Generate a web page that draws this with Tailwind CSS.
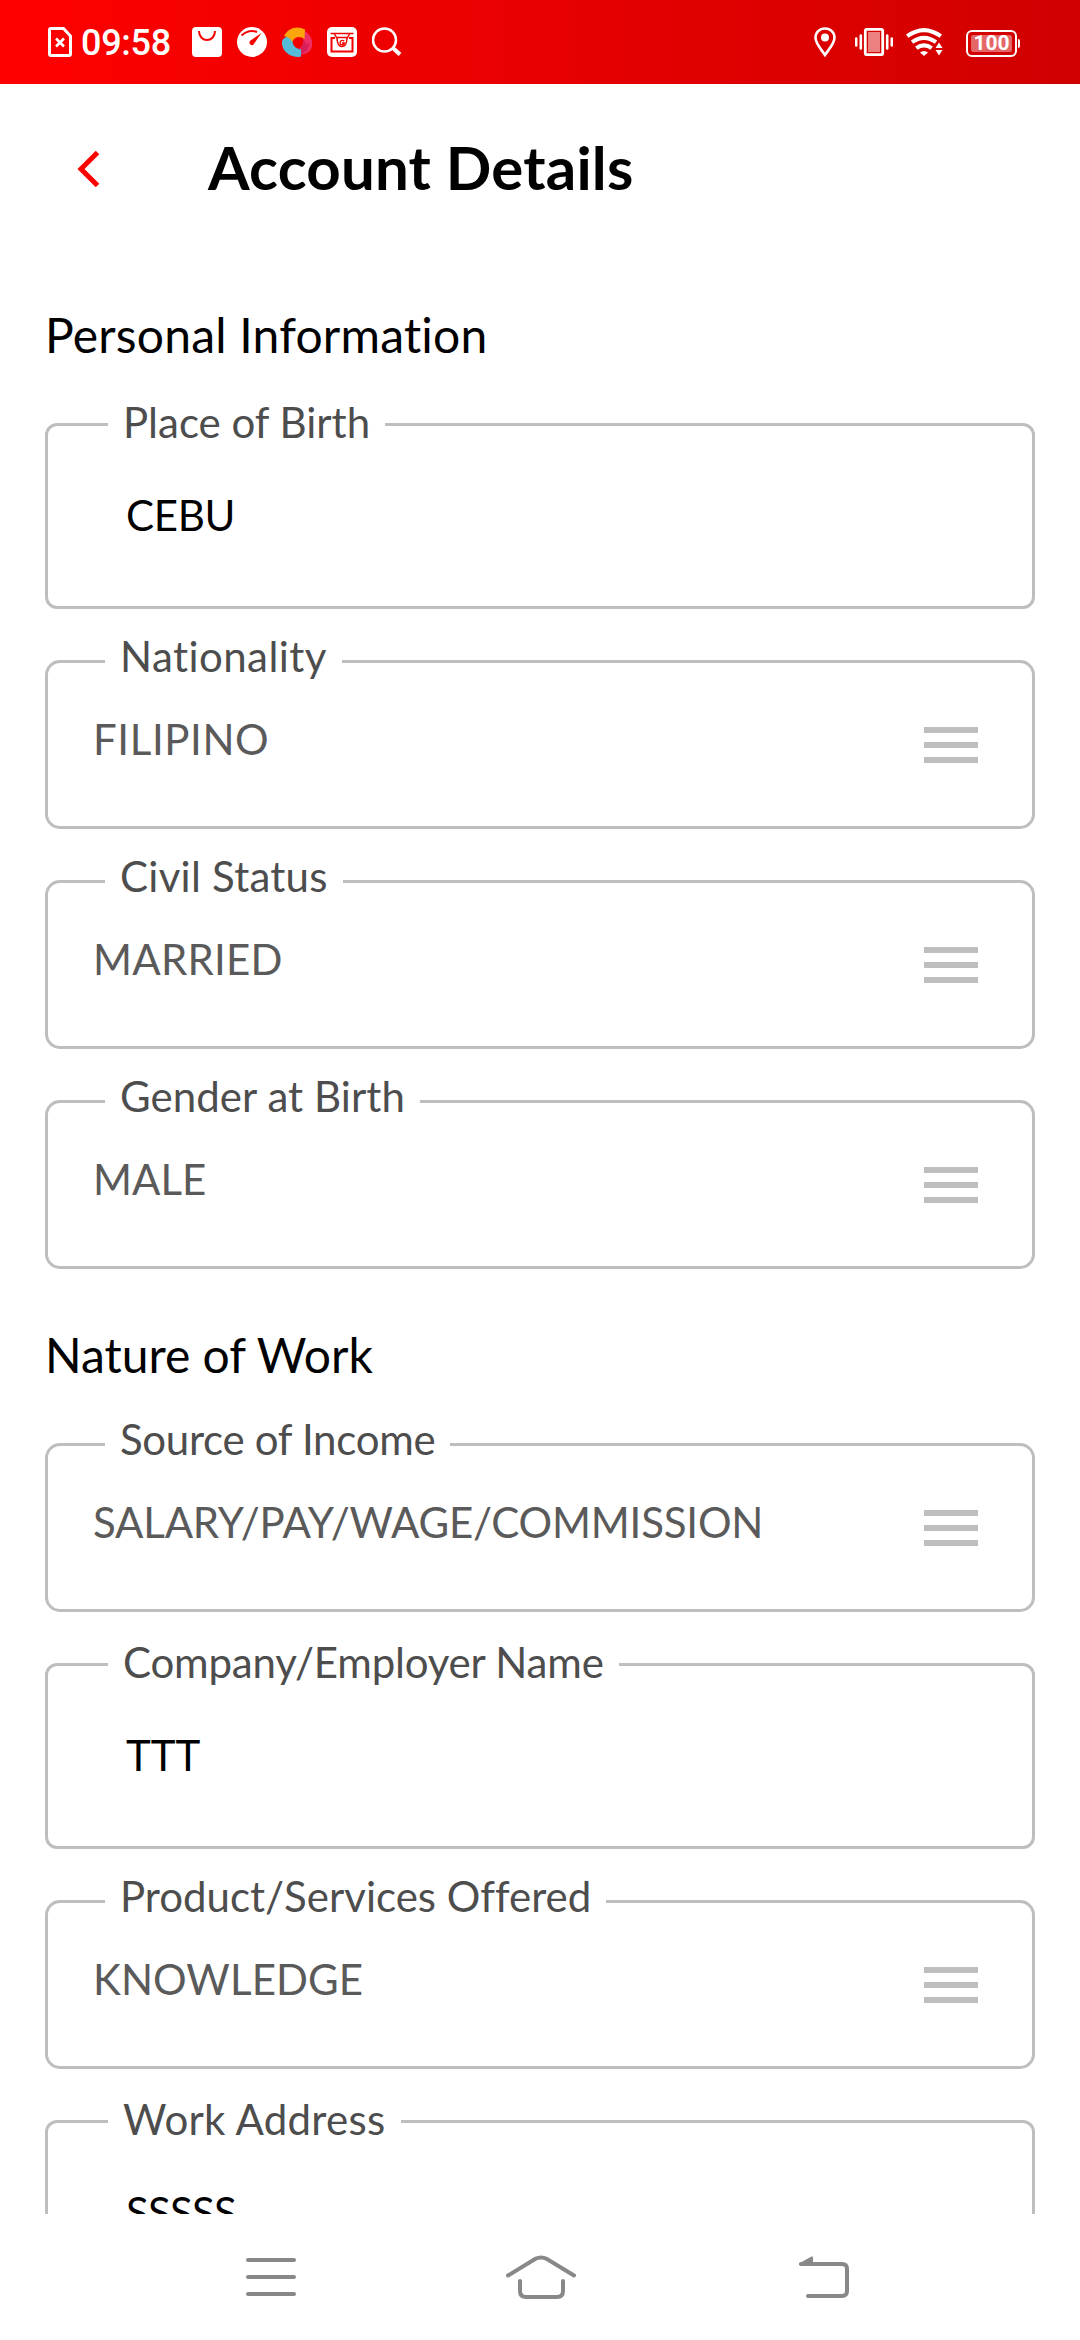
<!DOCTYPE html>
<html lang="en">
<head>
<meta charset="utf-8">
<title>Account Details</title>
<script src="https://cdn.jsdelivr.net/npm/@tailwindcss/browser@4"></script>
</head>
<body class="bg-white">
<div class="flex h-[2340px] w-[1080px] flex-col overflow-hidden bg-white font-[Lato,sans-serif] text-black [font-variant-ligatures:none]">

  <!-- Status bar -->
  <div class="flex h-[84px] shrink-0 items-center bg-linear-to-r from-[#ff0000] to-[#d00000] pl-12 pr-[60px]">
    <svg class="h-[30px] w-6" viewBox="0 0 24 30" fill="none" stroke="#fff">
      <path d="M3 1.500H15.500L22.500 9V27Q22.500 28.500 21 28.500H3Q1.500 28.500 1.500 27V3Q1.500 1.500 3 1.500Z" stroke-width="3"/>
      <path d="M8 11.500L16 19.500M16 11.500L8 19.500" stroke-width="2.600"/>
    </svg>
    <span class="ml-[9px] mt-[2px] w-[92px] font-[Roboto,sans-serif] text-[36px] font-medium leading-[42px] tracking-[-0.300px] text-white">09:58</span>
    <div class="ml-[19px] flex gap-[15px]">
      <svg class="size-[30px]" viewBox="0 0 30 30">
        <rect width="30" height="30" rx="4" fill="#fff"/>
        <path d="M7 4C7 16 23 16 23 4" fill="none" stroke="#f80000" stroke-width="2"/>
      </svg>
      <svg class="size-[30px]" viewBox="0 0 30 30">
        <circle cx="15" cy="15" r="15" fill="#fff"/>
        <path d="M4.500 8.500Q12 2 20 5" fill="none" stroke="#f60000" stroke-width="2"/>
        <path d="M24.500 6L16.500 17.500Q14.500 19 12.800 17Q11.800 15 13.500 13.500Z" fill="#f60000"/>
      </svg>
      <svg class="size-[30px]" viewBox="0 0 30 30">
        <path d="M22 4C29 7 32 15 29 22C27 26 22 28 17 27C22 24 24 17 21 11Z" fill="#ee2f66"/>
        <path d="M21 11C22 18 19 22 13.500 22L17 27.500C24 27 28 20 28 14C27 18 25 20 21 11Z" fill="#d81f5a"/>
        <path d="M0 14C2 10 6 9 11 10.500C9 17 13 22 19 22.500L19 29.800C8 31 -1 24 0 14Z" fill="#54bcd8"/>
        <path d="M2 9C6 1 15 -2 23 2.500L22.500 12C18 9 13 9 10 15C9 11 5 10 2 9Z" fill="#fca50c"/>
      </svg>
      <svg class="size-[30px]" viewBox="0 0 30 30">
        <rect width="30" height="30" rx="5" fill="#fff"/>
        <path d="M8 11H4.500V24.500H25.500V11H22" fill="none" stroke="#f20000" stroke-width="2"/>
        <path d="M3.500 6.500H26.500M7.500 7L10 11.500Q10.500 19.500 15 19.500Q19.500 19.500 20 11.500L22.500 7M10 10.500H20" fill="none" stroke="#f20000" stroke-width="1.500"/>
        <path d="M17.300 14Q15 12.500 13.500 14.300Q12.500 17 14.500 17.700Q17.300 18 17.300 16H15" fill="none" stroke="#f20000" stroke-width="1.300"/>
      </svg>
      <svg class="size-[30px]" viewBox="0 0 30 30" fill="none" stroke="#fff">
        <circle cx="12.500" cy="13" r="11.500" stroke-width="2.500"/>
        <path d="M20.500 20.500L28 27.500" stroke-width="4"/>
      </svg>
    </div>
    <div class="ml-auto flex items-center">
      <svg class="h-[30px] w-[22px]" viewBox="0 0 22 30">
        <path d="M11 1.500C5.500 1.500 1.500 5.500 1.500 10.800C1.500 16.500 7 22 11 28C15 22 20.500 16.500 20.500 10.800C20.500 5.500 16.500 1.500 11 1.500Z" fill="none" stroke="#fff" stroke-width="2.600"/>
        <circle cx="11" cy="10.500" r="4" fill="#fff"/>
      </svg>
      <svg class="ml-[19px] h-[28px] w-[38px]" viewBox="0 0 38 28">
        <rect x="10.300" y="1.300" width="17.400" height="25.400" rx="1.500" fill="none" stroke="#fff" stroke-width="2.800"/>
        <rect x="13" y="4" width="12" height="20" fill="#fff" opacity=".5"/>
        <path d="M1.200 10.500V17.500M5.800 7.500V20.500M32.200 7.500V20.500M36.800 10.500V17.500" stroke="#fff" stroke-width="2.600" stroke-linecap="round"/>
      </svg>
      <svg class="ml-[13px] h-[28px] w-[37px]" viewBox="0 0 37 28">
        <g fill="none" stroke="#fff" stroke-width="4">
          <path d="M1.200 8.200Q18 -4 34.800 8.200"/>
          <path d="M6 14.200Q18 5.500 30 14.200"/>
          <path d="M10.300 20.200Q18 14.500 25.700 20.200"/>
        </g>
        <path d="M14 24.500Q18 21.500 22 24.500L18 28Z" fill="#fff"/>
        <path d="M33 14.500L36.500 20H29.500ZM33 27.500L36.500 22H29.500Z" fill="#fff"/>
      </svg>
      <div class="relative ml-[23px] mt-[3px] flex h-[27px] w-[51px] items-center justify-center rounded-[6px] border-2 border-white p-[3px]">
        <div class="flex h-[17px] w-full items-center justify-center rounded-[2px] bg-white/40 font-[Roboto,sans-serif] text-[21px] font-bold leading-none text-white">100</div>
        <div class="absolute -right-[5px] top-[7px] h-[9px] w-[2px] rounded-r bg-white"></div>
      </div>
      <div class="w-[3px]"></div>
    </div>
  </div>

  <!-- Header -->
  <div class="flex h-[170px] shrink-0 items-center pl-[77px]">
    <svg class="h-[36px] w-6" viewBox="0 0 24 36"><path d="M20.500 1.500L4 18L20.500 34.500" fill="none" stroke="#ff0000" stroke-width="5"/></svg>
    <h1 class="ml-[107px] pb-1 text-[60px] font-bold leading-[72px] tracking-[0.200px]">Account Details</h1>
  </div>

  <!-- Form -->
  <div class="flex min-h-0 grow flex-col overflow-hidden px-[45px] pt-[52px]">
    <h2 class="shrink-0 text-[48px] leading-[58px] tracking-[0.200px]">Personal Information</h2>

    <div class="relative mt-[59px] h-[186px] shrink-0 rounded-[12px] border-3 border-[#bebebe] pl-[78px] pt-[64px]">
      <span class="absolute -top-[29px] left-[60px] bg-white px-[15px] text-[42px] leading-[50px] text-[#4d4d4d]">Place of Birth</span>
      <p class="text-[42px] leading-[50px] tracking-[-0.300px]">CEBU</p>
    </div>

    <div class="relative mt-[51px] flex h-[169px] shrink-0 items-start justify-between rounded-[15px] border-3 border-[#bebebe] pl-[45px] pr-[54px] pt-[51px]">
      <span class="absolute -top-[32px] left-[57px] bg-white px-[15px] text-[42px] leading-[50px] tracking-[0.450px] text-[#4d4d4d]">Nationality</span>
      <p class="text-[42px] leading-[50px] tracking-[0.600px] text-[#5a5a5a]">FILIPINO</p>
      <div class="mt-[13px] flex w-[54px] flex-col gap-[9px]"><i class="h-[6px] bg-[#bebebe]"></i><i class="h-[6px] bg-[#bebebe]"></i><i class="h-[6px] bg-[#bebebe]"></i></div>
    </div>

    <div class="relative mt-[51px] flex h-[169px] shrink-0 items-start justify-between rounded-[15px] border-3 border-[#bebebe] pl-[45px] pr-[54px] pt-[51px]">
      <span class="absolute -top-[32px] left-[57px] bg-white px-[15px] text-[42px] leading-[50px] tracking-[0.250px] text-[#4d4d4d]">Civil Status</span>
      <p class="text-[42px] leading-[50px] tracking-[0.250px] text-[#5a5a5a]">MARRIED</p>
      <div class="mt-[13px] flex w-[54px] flex-col gap-[9px]"><i class="h-[6px] bg-[#bebebe]"></i><i class="h-[6px] bg-[#bebebe]"></i><i class="h-[6px] bg-[#bebebe]"></i></div>
    </div>

    <div class="relative mt-[51px] flex h-[169px] shrink-0 items-start justify-between rounded-[15px] border-3 border-[#bebebe] pl-[45px] pr-[54px] pt-[51px]">
      <span class="absolute -top-[32px] left-[57px] bg-white px-[15px] text-[42px] leading-[50px] tracking-[0.070px] text-[#4d4d4d]">Gender at Birth</span>
      <p class="text-[42px] leading-[50px] text-[#5a5a5a]">MALE</p>
      <div class="mt-[13px] flex w-[54px] flex-col gap-[9px]"><i class="h-[6px] bg-[#bebebe]"></i><i class="h-[6px] bg-[#bebebe]"></i><i class="h-[6px] bg-[#bebebe]"></i></div>
    </div>

    <h2 class="mt-[57px] shrink-0 text-[48px] leading-[58px]">Nature of Work</h2>

    <div class="relative mt-[59px] flex h-[169px] shrink-0 items-start justify-between rounded-[15px] border-3 border-[#bebebe] pl-[45px] pr-[54px] pt-[51px]">
      <span class="absolute -top-[32px] left-[57px] bg-white px-[15px] text-[42px] leading-[50px] tracking-[-0.300px] text-[#4d4d4d]">Source of Income</span>
      <p class="text-[42px] leading-[50px] tracking-[-0.200px] text-[#5a5a5a]">SALARY/PAY/WAGE/COMMISSION</p>
      <div class="mt-[13px] flex w-[54px] flex-col gap-[9px]"><i class="h-[6px] bg-[#bebebe]"></i><i class="h-[6px] bg-[#bebebe]"></i><i class="h-[6px] bg-[#bebebe]"></i></div>
    </div>

    <div class="relative mt-[51px] h-[186px] shrink-0 rounded-[12px] border-3 border-[#bebebe] pl-[78px] pt-[64px]">
      <span class="absolute -top-[29px] left-[60px] bg-white px-[15px] text-[42px] leading-[50px] tracking-[-0.190px] text-[#4d4d4d]">Company/Employer Name</span>
      <p class="text-[42px] leading-[50px]">TTT</p>
    </div>

    <div class="relative mt-[51px] flex h-[169px] shrink-0 items-start justify-between rounded-[15px] border-3 border-[#bebebe] pl-[45px] pr-[54px] pt-[51px]">
      <span class="absolute -top-[32px] left-[57px] bg-white px-[15px] text-[42px] leading-[50px] text-[#4d4d4d]">Product/Services Offered</span>
      <p class="text-[42px] leading-[50px] tracking-[0.100px] text-[#5a5a5a]">KNOWLEDGE</p>
      <div class="mt-[13px] flex w-[54px] flex-col gap-[9px]"><i class="h-[6px] bg-[#bebebe]"></i><i class="h-[6px] bg-[#bebebe]"></i><i class="h-[6px] bg-[#bebebe]"></i></div>
    </div>

    <div class="relative mt-[51px] h-[186px] shrink-0 rounded-[12px] border-3 border-[#bebebe] pl-[78px] pt-[64px]">
      <span class="absolute -top-[29px] left-[60px] bg-white px-[15px] text-[42px] leading-[50px] tracking-[0.300px] text-[#4d4d4d]">Work Address</span>
      <p class="text-[42px] leading-[50px] tracking-[-0.800px]">SSSSS</p>
    </div>
  </div>

  <!-- System navigation -->
  <div class="flex h-[126px] shrink-0 items-center bg-white pl-[246px]">
    <svg class="h-[40px] w-[50px]" viewBox="0 0 50 40" stroke="#888" stroke-width="4" stroke-linecap="round"><path d="M2 3H48M2 20H48M2 37H48"/></svg>
    <svg class="ml-[210px] h-[44px] w-[70px]" viewBox="0 0 70 44" fill="none" stroke="#888" stroke-width="4" stroke-linecap="round"><path d="M2 20.500L29.500 3.800Q35 1 40.500 3.800L68 20.500M14 26V36Q14 42 20 42H51Q57 42 57 36V26"/></svg>
    <svg class="ml-[222px] h-[42px] w-[51px]" viewBox="0 0 51 42"><path d="M3 8H44Q49 8 49 13V35Q49 40 44 40H10" fill="none" stroke="#888" stroke-width="4" stroke-linecap="round"/><path d="M1 7.500L13.500 .5Q15 0 15 1.500V9H1Z" fill="#888"/></svg>
  </div>
</div>
</body>
</html>
